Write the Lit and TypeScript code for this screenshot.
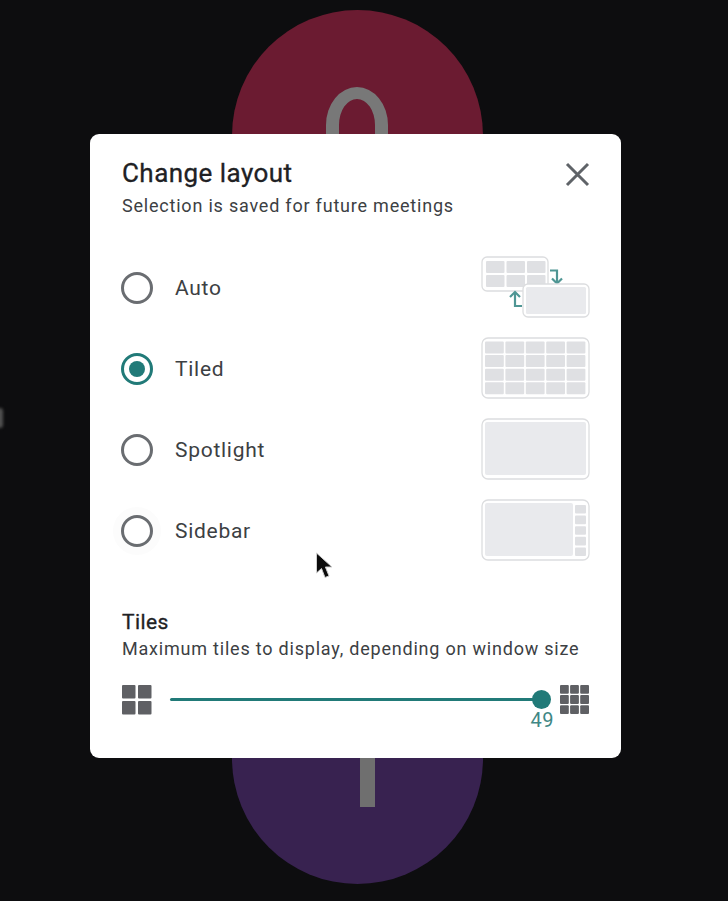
import { LitElement, html, css, svg } from "lit";
import { customElement } from "lit/decorators.js";

const cells = (cols: number, rows: number, x: number, y: number, w: number, h: number, gap: number, fill: string) => {
  const out = [];
  for (let r = 0; r < rows; r++) {
    for (let c = 0; c < cols; c++) {
      out.push(svg`<rect x=${x + c * (w + gap)} y=${y + r * (h + gap)} width=${w} height=${h} rx="1" fill=${fill}></rect>`);
    }
  }
  return out;
};

const frame = svg`<rect x="1" y="1" width="107" height="60" rx="6" fill="#fff" stroke="#dcdddf" stroke-width="1.3"></rect>`;

const thumbs: Record<string, unknown> = {
  Auto: html`<svg width="109" height="62" viewBox="0 0 109 62">
    <rect x="1" y="1" width="66" height="34" rx="5" fill="#fff" stroke="#dcdddf" stroke-width="1.3"></rect>
    ${cells(3, 2, 5, 5, 18.5, 12, 2, "#dfe0e3")}
    <path d="M69 14.500h7v12" fill="none" stroke="#4f9694" stroke-width="2.200"></path>
    <path d="M71 22.500l5 5 5-5" fill="none" stroke="#4f9694" stroke-width="2.200"></path>
    <path d="M41 50h-7V37" fill="none" stroke="#4f9694" stroke-width="2.200"></path>
    <path d="M29 41l5-5 5 5" fill="none" stroke="#4f9694" stroke-width="2.200"></path>
    <rect x="42" y="28" width="66" height="33" rx="5" fill="#fff" stroke="#dcdddf" stroke-width="1.3"></rect>
    <rect x="45" y="31" width="60" height="27" rx="1.500" fill="#e9eaed"></rect>
  </svg>`,
  Tiled: html`<svg width="109" height="62" viewBox="0 0 109 62">
    ${frame}${cells(5, 4, 4, 4.500, 18.800, 12, 1.600, "#dfe0e3")}
  </svg>`,
  Spotlight: html`<svg width="109" height="62" viewBox="0 0 109 62">
    ${frame}<rect x="4" y="4" width="101" height="53" rx="2" fill="#e9eaed"></rect>
  </svg>`,
  Sidebar: html`<svg width="109" height="62" viewBox="0 0 109 62">
    ${frame}<rect x="4" y="4" width="88" height="53" rx="2" fill="#e9eaed"></rect>
    ${cells(1, 5, 94, 6, 11, 8.600, 2, "#dfe0e3")}
  </svg>`,
};

@customElement("app-root")
export class AppRoot extends LitElement {
  static styles = css`
    :host {
      display: block;
      position: relative;
      width: 728px;
      height: 901px;
      overflow: hidden;
      background: #0d0d0f;
      font-family: Roboto, "Liberation Sans", sans-serif;
    }
    .backdrop {
      position: absolute;
      inset: 0;
    }
    .circle {
      position: absolute;
      left: 232px;
      width: 251px;
      height: 251px;
      border-radius: 50%;
    }
    .red { top: 10px; background: #6b1b31; }
    .purple { top: 633px; background: #382250; }
    .ring {
      position: absolute;
      left: 326px;
      top: 87px;
      width: 62px;
      height: 110px;
      box-sizing: border-box;
      border-style: solid;
      border-color: #787878;
      border-width: 12px 13px;
      border-radius: 31px / 38px;
    }
    .stem {
      position: absolute;
      left: 360px;
      top: 740px;
      width: 15px;
      height: 67px;
      background: #6f6f6f;
    }
    .edge {
      position: absolute;
      left: -3px;
      top: 408px;
      width: 6px;
      height: 20px;
      border-radius: 3px;
      background: #505050;
      filter: blur(1.500px);
    }
    .dialog {
      position: absolute;
      left: 90px;
      top: 134px;
      width: 531px;
      height: 624px;
      box-sizing: border-box;
      padding: 24px 31px 0 32px;
      background: #fff;
      border-radius: 9px;
      display: flex;
      flex-direction: column;
    }
    .head {
      display: flex;
      justify-content: space-between;
      align-items: flex-start;
    }
    h1 {
      margin: 0;
      font-size: 26px;
      line-height: 30px;
      font-weight: 400;
      color: #202124;
      letter-spacing: 0.45px;
      -webkit-text-stroke: 0.3px #202124;
    }
    .close {
      margin: 4px 0 0 0;
      padding: 0;
      border: 0;
      background: none;
      width: 25px;
      height: 25px;
      display: block;
    }
    .sub {
      margin: 6px 0 0;
      font-size: 18px;
      line-height: 24px;
      color: #3c4043;
      letter-spacing: 0.79px;
    }
    .options {
      margin-top: 39px;
      display: flex;
      flex-direction: column;
      gap: 19px;
    }
    .row {
      display: flex;
      align-items: center;
      height: 62px;
    }
    .radio {
      width: 32px;
      height: 32px;
      box-sizing: border-box;
      border: 3px solid #6a6d71;
      border-radius: 50%;
      margin-left: -1px;
      display: flex;
      align-items: center;
      justify-content: center;
      flex: none;
    }
    .halo { box-shadow: 0 0 0 8px #fcfcfc; }
    .radio.on { border-color: #217a78; }
    .dot {
      width: 16px;
      height: 16px;
      border-radius: 50%;
      background: #217a78;
    }
    .label {
      margin-left: 22px;
      font-size: 21px;
      letter-spacing: 0.72px;
      color: #3c4043;
      flex: 1;
    }
    .thumb { display: block; flex: none; align-self: flex-start; margin-top: -1px; }
    h2 {
      margin: 47px 0 0;
      font-size: 21px;
      line-height: 26px;
      font-weight: 400;
      color: #202124;
      letter-spacing: 0.4px;
      -webkit-text-stroke: 0.3px #202124;
    }
    .hint {
      margin: 2px 0 0;
      font-size: 18px;
      line-height: 24px;
      color: #3c4043;
      letter-spacing: 0.79px;
    }
    .slider {
      margin-top: 25px;
      display: flex;
      align-items: flex-start;
      height: 40px;
    }
    .track {
      position: relative;
      margin: 12px 0 0 18px;
      width: 372px;
      height: 3px;
      background: #217a78;
      border-radius: 2px;
    }
    .knob {
      position: absolute;
      right: -9.500px;
      top: -8.500px;
      width: 19px;
      height: 19px;
      border-radius: 50%;
      background: #217a78;
    }
    .value {
      position: absolute;
      right: -13px;
      top: 10px;
      font-size: 20px;
      line-height: 24px;
      letter-spacing: 0.500px;
      color: #3f8785;
    }
    .icon { display: block; flex: none; margin-top: -1px; }
    .icon.end { margin-left: 19px; }
    .cursor {
      position: absolute;
      left: 314px;
      top: 551px;
    }
  `;

  render() {
    const opts = ["Auto", "Tiled", "Spotlight", "Sidebar"];
    return html`
      <div class="backdrop">
        <div class="circle red"></div>
        <div class="circle purple"></div>
        <div class="ring"></div>
        <div class="stem"></div>
        <div class="edge"></div>
      </div>
      <section class="dialog">
        <div class="head">
          <h1>Change layout</h1>
          <button class="close" aria-label="Close">
            <svg width="25" height="25" viewBox="0 0 25 25">
              <path d="M2 2l21 21M23 2L2 23" stroke="#5f6368" stroke-width="3" fill="none"></path>
            </svg>
          </button>
        </div>
        <p class="sub">Selection is saved for future meetings</p>
        <div class="options">
          ${opts.map(
            (o) => html`<div class="row">
              <span class="radio ${o === "Tiled" ? "on" : ""} ${o === "Sidebar" ? "halo" : ""}">
                ${o === "Tiled" ? html`<span class="dot"></span>` : ""}
              </span>
              <span class="label">${o}</span>
              <span class="thumb">${thumbs[o]}</span>
            </div>`
          )}
        </div>
        <h2>Tiles</h2>
        <p class="hint">Maximum tiles to display, depending on window size</p>
        <div class="slider">
          <svg class="icon" width="30" height="30" viewBox="0 0 30 30">
            ${cells(2, 2, 0, 0, 13.500, 13.500, 2.500, "#5f6064")}
          </svg>
          <div class="track">
            <span class="knob"></span>
            <span class="value">49</span>
          </div>
          <svg class="icon end" width="30" height="30" viewBox="0 0 30 30">
            ${cells(3, 3, 0, 0, 8.800, 8.800, 1.300, "#5f6064")}
          </svg>
        </div>
      </section>
      <svg class="cursor" width="20" height="32" viewBox="0 0 20 32">
        <path d="M2.500 2v20l5-4.500 3.500 9 4-1.600-3.600-8.900h6.600z" fill="#0b0b0b" stroke="#cfcfcf" stroke-width="1"></path>
      </svg>
    `;
  }
}
